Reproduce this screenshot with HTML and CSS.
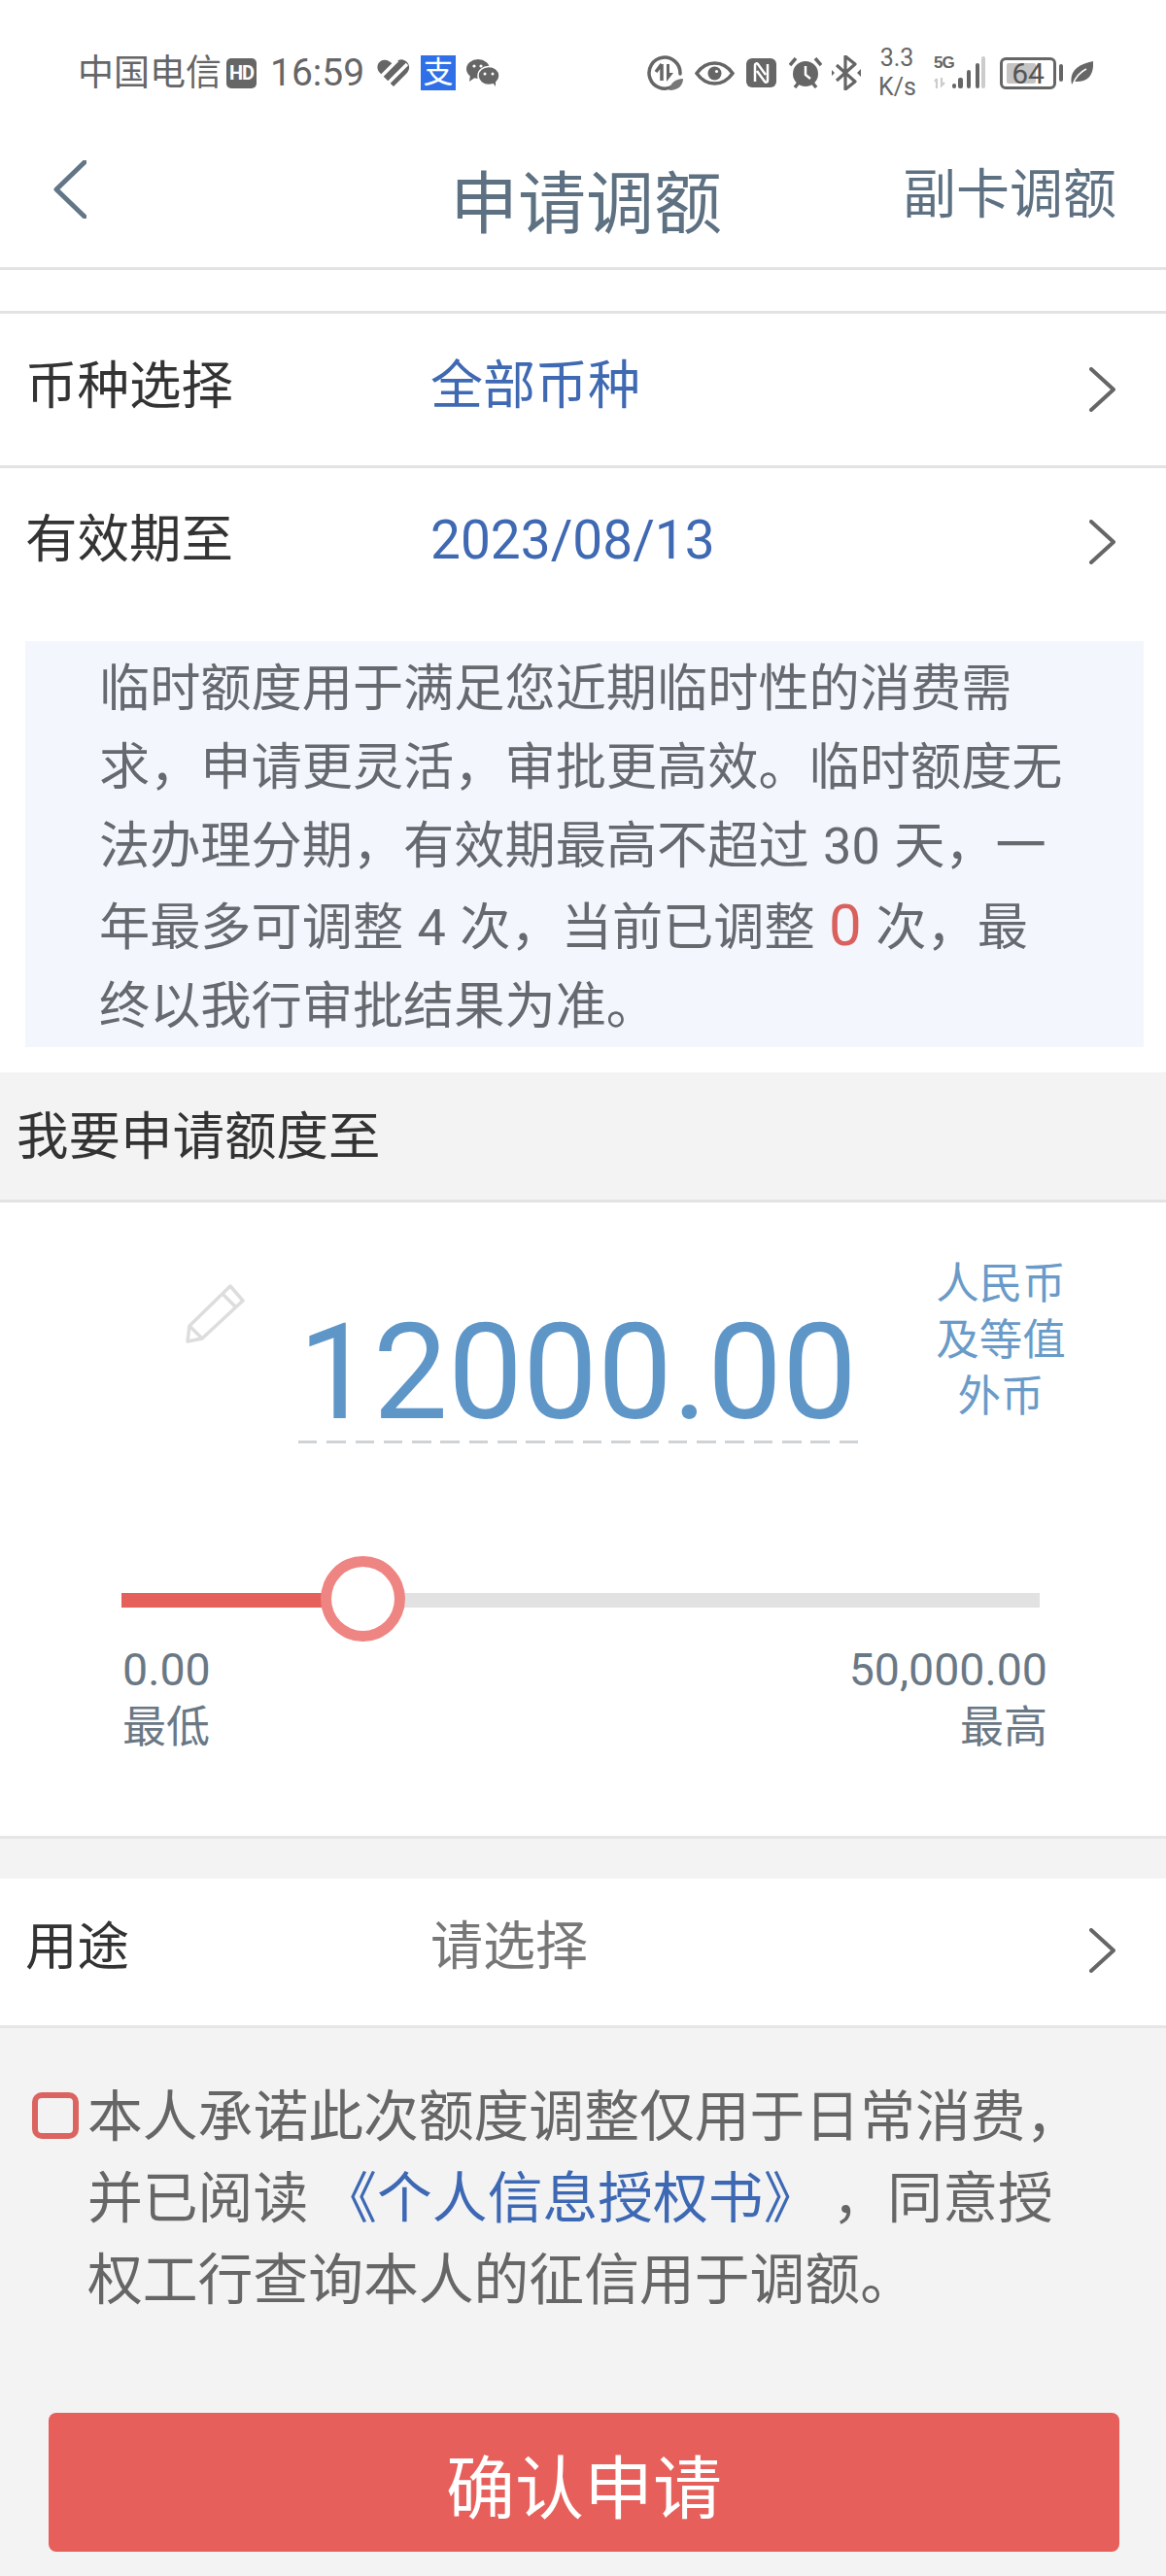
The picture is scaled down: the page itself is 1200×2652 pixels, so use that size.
FILE: index.html
```html
<!DOCTYPE html>
<html lang="zh-CN">
<head>
<meta charset="utf-8">
<title>申请调额</title>
<link rel="stylesheet" href="styles.css">
</head>
<body>
<div class="page">
  <div class="status">
    <div class="status-left">
      <span class="carrier">中国电信</span>
      <span class="hd">HD</span>
      <span class="time">16:59</span>
      <svg class="ic-heart" viewBox="0 0 34 28" width="34" height="28"><path d="M17 28 3 14C-2 9 1 2 6 1c4-1 7 1 10 4 3-3 8-6 12-4 5 2 7 8 3 13Z" fill="#666"/><path d="M5 17 21 1M12 24 31 5" stroke="#fff" stroke-width="3.5" fill="none"/></svg>
      <span class="alipay">支</span>
      <svg class="ic-wechat" viewBox="0 0 34 28" width="34" height="28"><ellipse cx="12" cy="10" rx="12" ry="10" fill="#666"/><path d="M4 16 3 23 10 18Z" fill="#666"/><ellipse cx="23" cy="17" rx="11" ry="9.500" fill="#666" stroke="#fff" stroke-width="1.500"/><path d="M27 24 30 28 30 21Z" fill="#666"/><circle cx="8" cy="7" r="1.600" fill="#fff"/><circle cx="15" cy="7" r="1.600" fill="#fff"/><circle cx="19" cy="15" r="1.500" fill="#fff"/><circle cx="27" cy="15" r="1.500" fill="#fff"/></svg>
    </div>
    <div class="status-right">
      <svg class="ic-saver" viewBox="0 0 37 36" width="37" height="36"><path d="M26 32A16 16 0 1 1 34 19" fill="none" stroke="#666" stroke-width="3.500" stroke-linecap="round"/><path d="M15 9v17M15 9l-6 8" fill="none" stroke="#666" stroke-width="3.500"/><path d="M20 9h3v9h4l-7 9Z" fill="#666"/><path d="M23 36c0-7 6-12 14-12 0 7-5 12-14 12Z" fill="#777"/></svg>
      <svg class="ic-eye" viewBox="0 0 41 25" width="41" height="25"><path d="M2 12.500C8 4 14 2 20.500 2S33 4 39 12.500C33 21 27 23 20.500 23S8 21 2 12.500Z" fill="none" stroke="#666" stroke-width="3.500"/><circle cx="20.500" cy="12.500" r="7" fill="#666"/><circle cx="22.500" cy="10.500" r="1.600" fill="#fff"/></svg>
      <svg class="ic-nfc" viewBox="0 0 31 30" width="31" height="30"><rect width="31" height="30" rx="6" fill="#666"/><path d="M9 24V7c0-2 2-2 3-1l8 11M22 6v17c0 2-2 2-3 1l-8-11" fill="none" stroke="#fff" stroke-width="2.500"/></svg>
      <svg class="ic-alarm" viewBox="0 0 34 32" width="34" height="32"><circle cx="17" cy="17" r="13" fill="#666"/><path d="M1 8 7 1M33 8 27 1M6 31l4-5M28 31l-4-5" stroke="#666" stroke-width="3.500" fill="none"/><path d="M17 9v9l5 4" stroke="#fff" stroke-width="2.500" fill="none"/></svg>
      <svg class="ic-bt" viewBox="0 0 30 36" width="30" height="36"><path d="M5 10 24 27 14 35V1L24 9 5 26" fill="none" stroke="#666" stroke-width="3.200" stroke-linejoin="round"/><path d="M0 15 3 18 0 21ZM30 14 26 18 30 22Z" fill="#666"/></svg>
      <span class="speed">3.3<br>K/s</span>
      <span class="signal">
        <span class="fiveg">5G</span>
        <svg class="ic-signal" viewBox="0 0 54 34" width="54" height="34"><path d="M3 33V23M1 26l2-3M8 22v8l3-3" stroke="#ccc" stroke-width="2.200" fill="none"/><rect x="19" y="28" width="4" height="5" rx="2" fill="#666"/><rect x="25" y="22" width="5" height="11" rx="2" fill="#666"/><rect x="34" y="14" width="4" height="19" rx="2" fill="#666"/><rect x="43" y="7" width="4" height="26" rx="2" fill="#666"/><rect x="49" y="0" width="4" height="33" rx="2" fill="#ccc"/></svg>
      </span>
      <span class="battery"><span class="battery-fill"></span><span class="battery-num">64</span></span>
      <span class="battery-nub"></span>
      <svg class="ic-leaf" viewBox="0 0 24 24" width="24" height="24"><path d="M2 24C-1 11 8 3 24 0c1 14-5 22-19 21Z" fill="#666"/><path d="M3 24C6 16 11 11 17 8" stroke="#fff" stroke-width="1.500" fill="none"/></svg>
    </div>
  </div>

  <header class="nav">
    <svg class="nav-back" viewBox="0 0 34 60" width="34" height="60"><path d="M32 2 3 30 32 58" fill="none" stroke="#637688" stroke-width="5" stroke-linecap="round" stroke-linejoin="round"/></svg>
    <h1 class="nav-title">申请调额</h1>
    <span class="nav-action">副卡调额</span>
  </header>
  <div class="spacer"></div>

  <div class="row row-top">
    <span class="row-label">币种选择</span>
    <span class="row-value">全部币种</span>
    <svg class="chev" viewBox="0 0 27 46" width="27" height="46"><path d="M2 2 25 23 2 44" fill="none" stroke="#666" stroke-width="4" stroke-linecap="round" stroke-linejoin="round"/></svg>
  </div>
  <div class="row row-plain">
    <span class="row-label">有效期至</span>
    <span class="row-value row-date">2023/08/13</span>
    <svg class="chev" viewBox="0 0 27 46" width="27" height="46"><path d="M2 2 25 23 2 44" fill="none" stroke="#666" stroke-width="4" stroke-linecap="round" stroke-linejoin="round"/></svg>
  </div>

  <div class="notice-wrap">
    <p class="notice">临时额度用于满足您近期临时性的消费需<br>求，申请更灵活，审批更高效。临时额度无<br>法办理分期，有效期最高不超过 30 天，一<br>年最多可调整 4 次，当前已调整 <span class="notice-count">0</span> 次，最<br>终以我行审批结果为准。</p>
  </div>

  <div class="section-title">我要申请额度至</div>

  <section class="amount">
    <div class="amount-row">
      <svg class="pencil" viewBox="0 0 61 61" width="61" height="61"><path d="M46 2 59 17 17 56 2 59 4 43ZM38 10 52 24M4 43 17 56" fill="none" stroke="#ddd" stroke-width="3.500" stroke-linejoin="round"/></svg>
      <div class="amount-value">
        <div class="amount-num">12000.00</div>
        <div class="amount-dash"></div>
      </div>
      <div class="amount-unit">人民币<br>及等值<br>外币</div>
    </div>
    <div class="slider">
      <div class="slider-fill" style="width:26.3%"><span class="slider-knob"></span></div>
    </div>
    <div class="range">
      <div class="range-col"><span class="range-num">0.00</span><span>最低</span></div>
      <div class="range-col range-right"><span class="range-num">50,000.00</span><span>最高</span></div>
    </div>
  </section>

  <div class="row row-use">
    <span class="row-label">用途</span>
    <span class="row-value row-placeholder">请选择</span>
    <svg class="chev" viewBox="0 0 27 46" width="27" height="46"><path d="M2 2 25 23 2 44" fill="none" stroke="#666" stroke-width="4" stroke-linecap="round" stroke-linejoin="round"/></svg>
  </div>

  <div class="agree">
    <span class="check"></span>
    <p class="agree-text">本人承诺此次额度调整仅用于日常消费，<br>并已阅读 <a class="agree-link">《个人信息授权书》</a> ，同意授<br>权工行查询本人的征信用于调额。</p>
  </div>

  <button class="submit">确认申请</button>
</div>
</body>
</html>
```
FILE: styles.css
```css
* { box-sizing: border-box; }
html, body { margin: 0; padding: 0; }
body {
  width: 1200px;
  height: 2652px;
  overflow: hidden;
  background: #f3f3f3;
  font-family: Roboto, "Noto Sans CJK SC", sans-serif;
}
.page { width: 1200px; }

/* status bar */
.status {
  height: 150px;
  background: #fff;
  display: flex;
  justify-content: space-between;
  padding: 0 75px 0 80px;
  color: #666;
}
.status-left, .status-right { display: flex; align-items: center; height: 150px; }
.carrier { font-size: 37px; line-height: 40px; width: 148px; margin-top: 2px; }
.hd {
  width: 31px; height: 31px; margin-left: 5px;
  background: #666; color: #fff; border-radius: 5px;
  font-size: 20px; font-weight: 700; line-height: 31px; text-align: center;
  letter-spacing: -1px;
}
.time { font-size: 39px; line-height: 40px; margin-left: 14px; width: 98px; }
.ic-heart { margin-left: 12px; }
.alipay {
  width: 36px; height: 36px; margin-left: 11px;
  background: #2f6fe8; color: #fff;
  font-size: 31px; line-height: 36px; text-align: center;
}
.ic-wechat { margin-left: 11px; }
.ic-eye { margin-left: 12px; }
.ic-nfc { margin-left: 12px; }
.ic-alarm { margin-left: 13px; }
.ic-bt { margin-left: 10px; }
.speed { font-size: 25px; line-height: 30px; margin-left: 18px; width: 38px; text-align: center; white-space: nowrap; }
.signal { position: relative; display: block; width: 54px; height: 34px; margin-left: 19px; }
.fiveg {
  position: absolute; left: 0; top: -3px;
  font-size: 17px; line-height: 20px; font-weight: 700; letter-spacing: -1px;
  font-family: "Liberation Sans", sans-serif;
}
.ic-signal { display: block; }
.battery {
  position: relative; display: block;
  width: 58px; height: 33px; margin-left: 14px;
  border: 3.500px solid #666; border-radius: 6px;
}
.battery-fill { display: block; width: 30px; height: 21px; margin: 3px 0 0 4px; background: #c4c4c4; border-radius: 2px; }
.battery-num {
  position: absolute; left: 0; right: 0; top: 0; bottom: 0;
  font-size: 30px; line-height: 27px; text-align: center; color: #555;
}
.battery-nub { width: 4px; height: 18px; margin-left: 3px; background: #666; border-radius: 2px; }
.ic-leaf { margin-left: 7px; }

/* nav */
.nav {
  position: relative;
  height: 128px;
  background: #fff;
  border-bottom: 3px solid #e3e3e3;
  display: flex;
  align-items: center;
  padding: 0 51px 0 55px;
  color: #5e7182;
}
.nav-back { margin-top: -35px; }
.nav-title {
  margin: 0;
  position: absolute; left: 0; right: 0; top: 11px;
  padding-left: 6px;
  font-size: 70px; font-weight: 400; line-height: 100px; text-align: center;
}
.nav-action { margin-left: auto; margin-top: -26px; font-size: 55px; line-height: 80px; }
.spacer { height: 45px; background: #fff; border-bottom: 3px solid #e3e3e3; }

/* rows */
.row {
  display: flex; align-items: center;
  background: #fff;
  padding: 0 52px 0 26px;
}
.row-top { height: 159px; border-bottom: 3px solid #e3e3e3; }
.row-plain { height: 157px; padding-bottom: 6px; }
.row-use { height: 154px; margin-top: 41px; padding-bottom: 3px; border-bottom: 3px solid #e6e6e6; }
.row-label { width: 417px; font-size: 53.500px; color: #333; line-height: 70px; margin-top: -3px; }
.row-value { font-size: 54px; color: #3f69b2; line-height: 70px; margin-top: -3px; }
.row-top .row-label, .row-top .row-value, .row-use .row-label, .row-use .row-value { margin-top: -6px; }
.row-date { font-size: 55px; }
.row-placeholder { color: #777; }
.chev { margin-left: auto; }

/* notice */
.notice-wrap { background: #fff; padding: 21px 23px 26px 26px; }
.notice {
  margin: 0; height: 418px;
  background: #f3f6fd;
  padding: 9px 0 0 76px;
  font-size: 52.200px; line-height: 81px; color: #66696e;
  word-spacing: 1.500px;
}
.notice-count { color: #d9605c; font-size: 60px; }

/* section */
.section-title {
  height: 134px; padding-left: 17px;
  background: #f3f3f3;
  border-bottom: 3px solid #e3e3e3;
  font-size: 53.500px; line-height: 134px; color: #333;
}

/* amount */
.amount {
  height: 655px;
  background: #fff;
  border-bottom: 3px solid #e6e6e6;
  padding-top: 55px;
}
.amount-row {
  display: grid;
  grid-template-columns: 61px 576px 130px;
  column-gap: 55px;
  padding-left: 191px;
}
.pencil { margin-top: 29px; }
.amount-value { margin-top: 51px; }
.amount-num {
  padding-right: 15px;
  font-size: 137px; line-height: 138px; color: #5f96c8;
  text-align: center; white-space: nowrap;
}
.amount-dash {
  height: 3px; margin-top: 1px;
  background: repeating-linear-gradient(90deg, #cfd3d5 0 19.500px, transparent 19.500px 29.300px);
}
.amount-unit {
  margin-left: 25px; width: 134px;
  font-size: 44.500px; line-height: 58px; color: #6a9bc8; text-align: center;
}
.slider {
  height: 15px; margin: 154px 130px 0 125px;
  background: #e2e2e2;
}
.slider-fill { position: relative; height: 15px; background: #e5605b; }
.slider-knob {
  position: absolute; right: -43px; top: -38px;
  width: 87px; height: 88px;
  background: #fff; border: 11px solid #ef8582; border-radius: 50%;
}
.range {
  display: flex; justify-content: space-between;
  margin: 35px 122px 0 126px;
  font-size: 45px; line-height: 58px; color: #6a7885;
}
.range-col { display: flex; flex-direction: column; gap: 2px; }
.range-num { font-size: 46.500px; }
.range-right { align-items: flex-end; }

/* agreement */
.agree { display: flex; padding: 50px 0 0 33px; }
.check {
  flex: none;
  width: 48px; height: 48px; margin: 16px 9px 0 0;
  border: 6px solid #dc6460; border-radius: 10px;
}
.agree-text {
  margin: 0;
  font-size: 56.800px; line-height: 84px; color: #666; white-space: nowrap;
}
.agree-link { color: #3d68b4; }

/* submit */
.submit {
  display: block;
  width: 1102px; height: 143px;
  margin: 94px 0 0 50px;
  border: 0; border-radius: 8px;
  background: #e65f5a; color: #fff;
  font-family: Roboto, "Noto Sans CJK SC", sans-serif;
  font-size: 71px;
}
```
